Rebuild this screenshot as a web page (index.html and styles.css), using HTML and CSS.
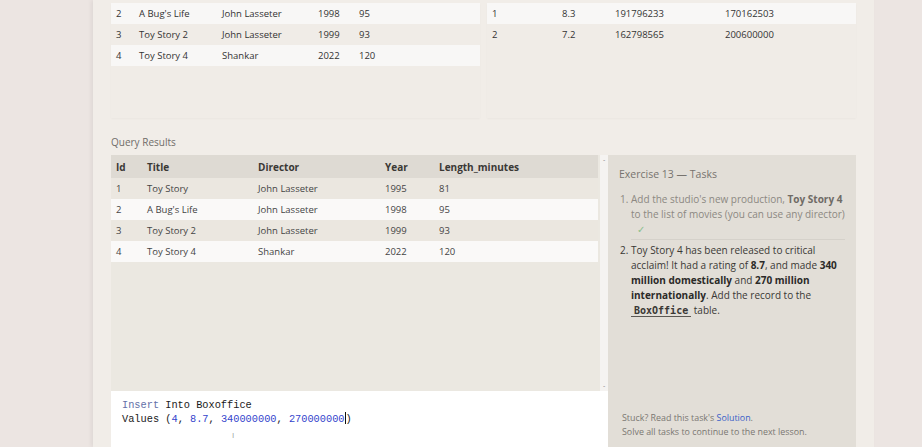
FILE: index.html
```html
<!DOCTYPE html>
<html>
<head>
<meta charset="utf-8">
<link rel="stylesheet" href="styles.css">
</head>
<body>
<div class="page">
  <div class="top">
    <div class="tbox">
      <div class="trow light"><span class="c-id">2</span><span class="c-title">A Bug's Life</span><span class="c-dir">John Lasseter</span><span class="c-year">1998</span><span>95</span></div>
      <div class="trow"><span class="c-id">3</span><span class="c-title">Toy Story 2</span><span class="c-dir">John Lasseter</span><span class="c-year">1999</span><span>93</span></div>
      <div class="trow light"><span class="c-id">4</span><span class="c-title">Toy Story 4</span><span class="c-dir">Shankar</span><span class="c-year">2022</span><span>120</span></div>
    </div>
    <div class="tbox">
      <div class="trow light"><span class="b1">1</span><span class="b2">8.3</span><span class="b3">191796233</span><span>170162503</span></div>
      <div class="trow"><span class="b1">2</span><span class="b2">7.2</span><span class="b3">162798565</span><span>200600000</span></div>
    </div>
  </div>
  <div class="label">Query Results</div>
  <div class="work">
    <div class="left">
      <div class="results">
        <div class="rtable">
          <div class="rrow head"><span class="r-id">Id</span><span class="r-title">Title</span><span class="r-dir">Director</span><span class="r-year">Year</span><span>Length_minutes</span></div>
          <div class="rrow"><span class="r-id">1</span><span class="r-title">Toy Story</span><span class="r-dir">John Lasseter</span><span class="r-year">1995</span><span>81</span></div>
          <div class="rrow light"><span class="r-id">2</span><span class="r-title">A Bug's Life</span><span class="r-dir">John Lasseter</span><span class="r-year">1998</span><span>95</span></div>
          <div class="rrow"><span class="r-id">3</span><span class="r-title">Toy Story 2</span><span class="r-dir">John Lasseter</span><span class="r-year">1999</span><span>93</span></div>
          <div class="rrow light"><span class="r-id">4</span><span class="r-title">Toy Story 4</span><span class="r-dir">Shankar</span><span class="r-year">2022</span><span>120</span></div>
        </div>
        <div class="scroll"><span class="arr">-</span><span class="arr">-</span></div>
      </div>
      <div class="editor">
        <div class="code"><span class="kw">Insert</span> Into Boxoffice</div>
        <div class="code">Values (<span class="num">4</span>, <span class="num">8.7</span>, <span class="num">340000000</span>, <span class="num">270000000</span><span class="caret"></span>)</div>
        <div class="ibeam">I</div>
      </div>
    </div>
    <div class="tasks">
      <div class="ttitle">Exercise 13 — Tasks</div>
      <ol class="tlist">
        <li class="done">Add the studio's new production, <b>Toy Story 4</b> to the list of movies (you can use any director)<div class="check">✓</div></li>
        <li class="cur">Toy Story 4 has been released to critical acclaim! It had a rating of <b>8.7</b>, and made <b>340 million domestically</b> and <b>270 million internationally</b>. Add the record to the <code>BoxOffice</code> table.</li>
      </ol>
      <div class="stuck">
        <div>Stuck? Read this task's <span class="link">Solution</span>.</div>
        <div>Solve all tasks to continue to the next lesson.</div>
      </div>
    </div>
  </div>
</div>
</body>
</html>
```

FILE: styles.css
```css
* { box-sizing: border-box; }
html, body { margin: 0; padding: 0; }
body {
  background: #ece5e2;
  font-family: "Open Sans", "Noto Sans", sans-serif;
  font-size: 10px;
  color: #333;
  overflow: hidden;
  height: 447px;
}
.page {
  margin-left: 93px;
  width: 781px;
  height: 447px;
  background: #f1ede8;
  padding: 3px 18px 0 18px;
  box-shadow: -2px 0 4px rgba(0,0,0,0.06);
}
.top { display: flex; gap: 7px; }
.tbox {
  width: 369px;
  height: 115px;
  background: #f0ece7;
  box-shadow: 0 1px 2px rgba(0,0,0,0.03);
}
.trow {
  display: flex;
  align-items: center;
  height: 21px;
  padding-left: 5px;
  color: #333;
  font-size: 9.5px;
}
.trow.light { background: #f8f7f6; }
.c-id { width: 23px; }
.c-title { width: 83px; }
.c-dir { width: 96px; }
.c-year { width: 41px; }
.b1 { width: 70px; }
.b2 { width: 53px; }
.b3 { width: 110px; }
.label {
  margin-top: 18px;
  color: #6f6c68;
  font-size: 10px;
  height: 13px;
  line-height: 13px;
}
.work { display: flex; margin-top: 6px; }
.left { width: 497px; display: flex; flex-direction: column; }
.results {
  display: flex;
  height: 236px;
  background: #ebe8e1;
}
.rtable { width: 489px; }
.rrow {
  display: flex;
  align-items: center;
  height: 21px;
  padding-left: 5px;
  background: #ebe7e0;
  font-size: 9.5px;
  color: #444;
}
.rrow.light { background: #faf9f8; }
.rrow.head {
  height: 23px;
  background: #dedad3;
  font-weight: 700;
  font-size: 10px;
  color: #3a3835;
}
.r-id { width: 31px; }
.r-title { width: 111px; }
.r-dir { width: 127px; }
.r-year { width: 54px; }
.scroll {
  width: 8px;
  margin-left: 2px;
  background: #f5f3f1;
  display: flex;
  flex-direction: column;
  justify-content: space-between;
  align-items: center;
  font-size: 7px;
  color: #888;
  line-height: 8px;
  padding: 1px 0;
}
.editor {
  height: 60px;
  background: #ffffff;
  padding: 8px 0 0 11px;
  position: relative;
}
.code {
  font-family: "Liberation Mono", "DejaVu Sans Mono", monospace;
  font-size: 10.3px;
  line-height: 13px;
  color: #1a1a1a;
  white-space: pre;
}
.kw { color: #6470a8; }
.num { color: #3344cc; }
.caret {
  display: inline-block;
  width: 1px;
  height: 12px;
  background: #111;
  vertical-align: -2px;
}
.ibeam {
  position: absolute;
  left: 121px;
  top: 38px;
  font-size: 8px;
  color: #999;
}
.tasks {
  width: 248px;
  height: 292px;
  background: #e2ded7;
  padding: 12px 11px 8px 11px;
  display: flex;
  flex-direction: column;
}
.ttitle {
  color: #77736e;
  font-size: 10.5px;
  line-height: 14px;
}
.tlist {
  margin: 11px 0 0 0;
  padding-left: 12px;
  font-size: 10px;
  line-height: 15px;
}
.tlist li { padding-left: 0; }
.tlist li.done {
  color: #8c8882;
  border-bottom: 1px solid #d5d1ca;
  padding-bottom: 2px;
  margin-bottom: 3px;
}
.tlist li.done b { color: #6f6b66; }
.check {
  color: #8cc08c;
  font-size: 10px;
  line-height: 15px;
  padding-left: 6px;
}
.tlist li.cur { color: #3a3835; }
.tlist li.cur b { color: #2b2a28; }
code {
  font-family: "DejaVu Sans Mono", monospace;
  font-weight: 700;
  font-size: 10px;
  color: #3a3835;
  padding: 0 3px;
  border-bottom: 1px solid #5b5853;
}
.stuck {
  margin-top: auto;
  padding-left: 3px;
  font-size: 8.9px;
  line-height: 14px;
  color: #7a7772;
}
.link { color: #3b5fc8; }
```
